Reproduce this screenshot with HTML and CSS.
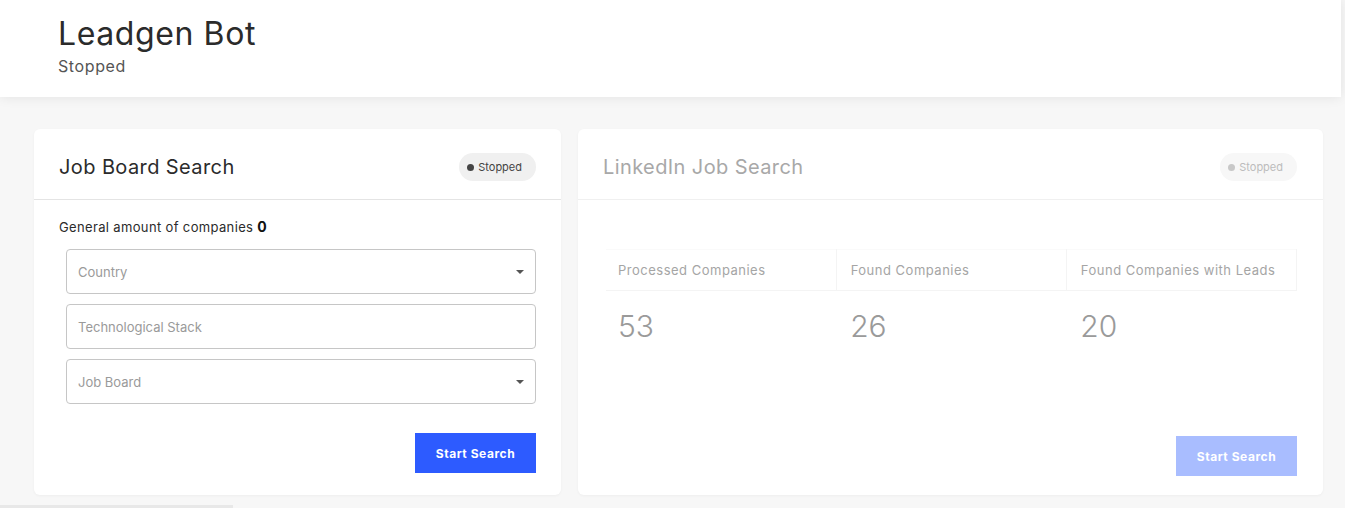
FILE: index.html
```html
<!DOCTYPE html>
<html lang="en">
<head>
    <meta charset="UTF-8">
    <meta name="viewport" content="width=device-width, initial-scale=1.0">
    <title>Leadgen Bot</title>
    <link rel="stylesheet" href="styles.css">
</head>
<body>
    <!-- Page header -->
    <div class="page-header">
        <h1>Leadgen Bot</h1>
        <p>Stopped</p>
    </div>

    <div class="content">
        <!-- Job board search -->
        <div class="card card-left">
            <div class="card-head">
                <h3>Job Board Search</h3>
                <span class="badge"><i></i>Stopped</span>
            </div>
            <div class="card-body">
                <p class="total">General amount of companies <b>0</b></p>
                <div class="form">
                    <div class="field select">Country</div>
                    <div class="field">Technological Stack</div>
                    <div class="field select">Job Board</div>
                </div>
                <div class="actions">
                    <button class="btn">Start Search</button>
                </div>
            </div>
        </div>

        <!-- LinkedIn search (disabled) -->
        <div class="card card-right disabled">
            <div class="card-head">
                <h3>LinkedIn Job Search</h3>
                <span class="badge"><i></i>Stopped</span>
            </div>
            <div class="card-body">
                <table class="stats">
                    <tr>
                        <th>Processed Companies</th>
                        <th>Found Companies</th>
                        <th>Found Companies with Leads</th>
                    </tr>
                    <tr>
                        <td>53</td>
                        <td>26</td>
                        <td>20</td>
                    </tr>
                </table>
                <div class="actions">
                    <button class="btn">Start Search</button>
                </div>
            </div>
        </div>
    </div>

    <div class="scroll-thumb"></div>
</body>
</html>
```

FILE: styles.css
```css
body {
    font-family: Inter, "Noto Sans", sans-serif;
    margin: 0;
    padding: 0;
    background-color: #f7f7f7;
    color: #2b2b2b;
    height: 508px;
    overflow: hidden;
    position: relative;
}

/* Header */
.page-header {
    background-color: #fff;
    height: 97px;
    margin-right: 4px;
    padding: 14px 58px 0;
    box-sizing: border-box;
    box-shadow: 0 0 12px rgba(0, 0, 0, 0.09);
}

    .page-header h1 {
        margin: 0;
        font-size: 32px;
        font-weight: 400;
        line-height: 40px;
        letter-spacing: 0.6px;
        color: #2b2b2b;
    }

    .page-header p {
        margin: 2px 0 0;
        font-size: 16px;
        line-height: 20px;
        letter-spacing: 0.6px;
        color: #555;
    }

/* Cards */
.content {
    display: flex;
    gap: 17px;
    padding: 32px 22px 0 34px;
}

.card {
    background-color: #fff;
    border-radius: 6px;
    height: 366px;
    display: flex;
    flex-direction: column;
    box-shadow: 0 1px 3px rgba(0, 0, 0, 0.04);
}

.card-left {
    width: 527px;
}

.card-right {
    flex: 1;
}

.card-head {
    height: 71px;
    box-sizing: border-box;
    flex-shrink: 0;
    display: flex;
    justify-content: space-between;
    align-items: center;
    padding: 6px 25px 0;
    border-bottom: 1px solid #e4e4e4;
}

    .card-head h3 {
        margin: 0;
        font-size: 20px;
        font-weight: 400;
        letter-spacing: 0.4px;
        color: #2b2b2b;
    }

.badge {
    display: flex;
    align-items: center;
    gap: 4px;
    height: 28px;
    padding: 0 14px 0 8px;
    border-radius: 14px;
    background-color: #f0f0f0;
    font-size: 11px;
    color: #444;
}

    .badge i {
        width: 7px;
        height: 7px;
        border-radius: 50%;
        background-color: #444;
    }

.card-body {
    flex: 1;
    display: flex;
    flex-direction: column;
    padding: 19px 25px 22px;
}

.total {
    margin: 0 0 14px;
    font-size: 13px;
    line-height: 16px;
    letter-spacing: 0.35px;
}

    .total b {
        font-size: 14px;
        color: #111;
    }

.form {
    display: flex;
    flex-direction: column;
    gap: 10px;
    padding-left: 7px;
}

.field {
    position: relative;
    height: 45px;
    box-sizing: border-box;
    border: 1px solid #c6c6c6;
    border-radius: 4px;
    padding: 0 11px;
    display: flex;
    align-items: center;
    font-size: 13px;
    color: #9a9a9a;
}

    .field.select::after {
        content: "";
        position: absolute;
        right: 11px;
        top: 20px;
        border-left: 4px solid transparent;
        border-right: 4px solid transparent;
        border-top: 4px solid #555;
    }

.actions {
    margin-top: auto;
    display: flex;
    justify-content: flex-end;
}

.btn {
    width: 121px;
    height: 40px;
    border: none;
    background-color: #2d5bff;
    color: #fff;
    font-family: Inter, "Noto Sans", sans-serif;
    font-size: 12px;
    font-weight: 700;
    letter-spacing: 0.55px;
    cursor: pointer;
}

/* Disabled card */
.disabled .card-head {
    padding-right: 26px;
    border-bottom-color: #f0f0f0;
}

    .disabled .card-head h3 {
        color: #a8a8a8;
    }

.disabled .badge {
    background-color: #f7f7f7;
    color: #bcbcbc;
}

    .disabled .badge i {
        background-color: #c8c8c8;
    }

.disabled .card-body {
    padding: 49px 26px 19px 28px;
}

.disabled .btn {
    background-color: #a9bdff;
    cursor: default;
}

.stats {
    width: 100%;
    border-collapse: collapse;
    table-layout: fixed;
}

    .stats th {
        height: 40px;
        text-align: left;
        padding: 0 12px;
        font-size: 13px;
        font-weight: 400;
        letter-spacing: 0.5px;
        color: #a5a5a5;
        border: 1px solid #f4f4f4;
        border-top-color: #fafafa;
        border-left: none;
    }

        .stats th:nth-child(2),
        .stats td:nth-child(2) {
            padding-left: 14px;
        }

        .stats th:last-child,
        .stats td:last-child {
            padding-left: 14px;
        }

    .stats td {
        padding: 17px 12px 0;
        font-size: 30px;
        font-weight: 300;
        color: #9a9a9a;
    }

/* Horizontal scrollbar thumb at the bottom edge */
.scroll-thumb {
    position: absolute;
    left: 0;
    bottom: 0;
    width: 233px;
    height: 3px;
    background-color: #e8e8e8;
}
```
